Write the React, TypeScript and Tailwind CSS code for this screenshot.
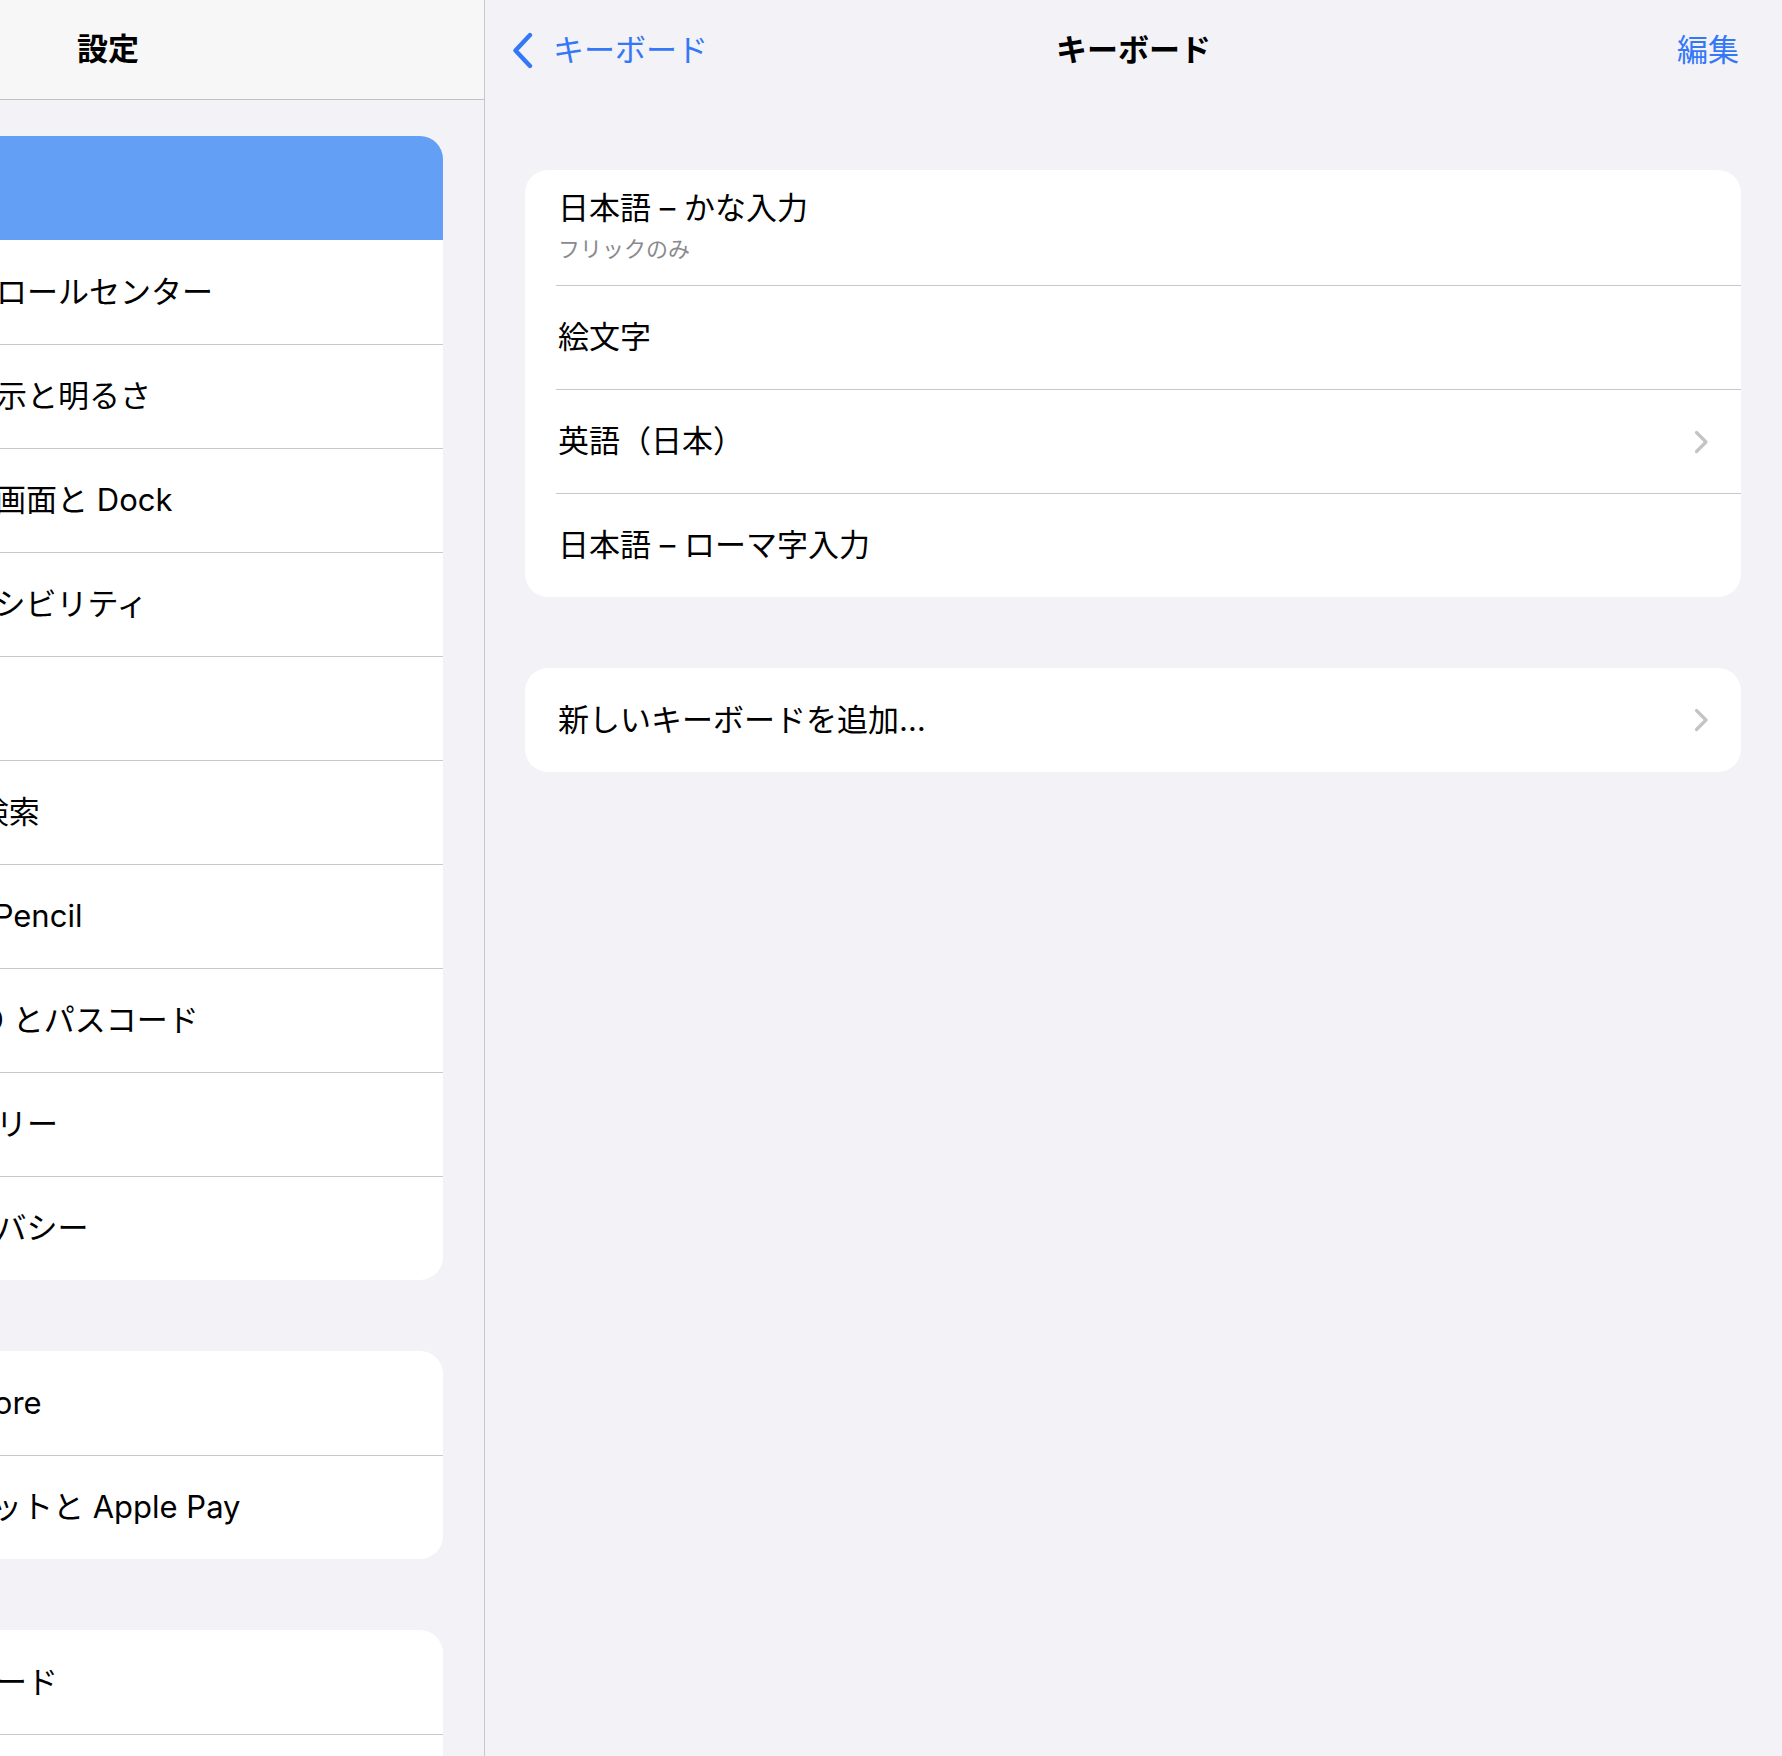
import React from "react";

const font = {
  fontFamily: 'Inter, "Noto Sans CJK JP", "Noto Sans", sans-serif',
};

const sidebarGroups = [
  [
    { label: "一般", ml: "ml-[-97px]" },
    { label: "コントロールセンター", ml: "ml-[-97px]" },
    { label: "画面表示と明るさ", ml: "ml-[-97px]" },
    { label: "ホーム画面と Dock", ml: "ml-[-97px]" },
    { label: "アクセシビリティ", ml: "ml-[-97px]" },
    { label: "壁紙", ml: "ml-[-97px]" },
    { label: "Siri と検索", ml: "ml-[-109px]" },
    { label: "Apple Pencil", ml: "ml-[-100px]" },
    { label: "Touch ID とパスコード", ml: "ml-[-126px]" },
    { label: "バッテリー", ml: "ml-[-97px]" },
    { label: "プライバシー", ml: "ml-[-97px]" },
  ],
  [
    { label: "App Store", ml: "ml-[-104px]" },
    { label: "ウォレットと Apple Pay", ml: "ml-[-102px]" },
  ],
  [
    { label: "パスワード", ml: "ml-[-97px]" },
    { label: "メール", ml: "ml-[-97px]" },
    { label: "連絡先", ml: "ml-[-97px]" },
  ],
];

const keyboards = ["絵文字", "英語（日本）", "日本語 – ローマ字入力"];

function Chevron() {
  return (
    <svg width="15" height="24" viewBox="0 0 15 24" fill="none">
      <path
        d="M2.5 2.5 L12 12 L2.5 21.5"
        stroke="#c4c4c7"
        strokeWidth="3.2"
        strokeLinecap="round"
        strokeLinejoin="round"
      />
    </svg>
  );
}

function BackChevron() {
  return (
    <svg width="23" height="37" viewBox="0 0 23 37" fill="none">
      <path
        d="M19 3 L4.5 18.5 L19 34"
        stroke="#3478f6"
        strokeWidth="4.4"
        strokeLinecap="round"
        strokeLinejoin="round"
      />
    </svg>
  );
}

function Sidebar() {
  return (
    <div className="w-[485px] h-full shrink-0 border-r border-[#c8c8cc] bg-[#f2f2f7] overflow-hidden">
      <div className="h-[100px] bg-[#f7f7f7] border-b border-[#c2c2c6] flex items-center pl-[77px]">
        <span className="text-[31px] font-bold text-black">設定</span>
      </div>
      <div className="pt-[36px] flex flex-col gap-[71px]">
        {sidebarGroups.map((group, gi) => (
          <div
            key={gi}
            className="w-[443px] bg-white rounded-r-[23px] overflow-hidden"
          >
            {group.map((item, i) => {
              const selected = gi === 0 && i === 0;
              const line = i > 0 && !(gi === 0 && i === 1);
              return (
                <div
                  key={item.label}
                  className={
                    "h-[104px] flex items-center " +
                    (selected ? "bg-[#63a0f5] " : "") +
                    (line ? "border-t border-[#c8c8cc]" : "")
                  }
                >
                  <span
                    className={
                      item.ml + " whitespace-nowrap text-[31px] text-black"
                    }
                  >
                    {item.label}
                  </span>
                </div>
              );
            })}
          </div>
        ))}
      </div>
    </div>
  );
}

export default function App() {
  return (
    <div
      className="w-[1782px] h-[1756px] flex bg-[#f2f2f7] overflow-hidden"
      style={font}
    >
      <Sidebar />
      <div className="flex-1 h-full">
        <div className="h-[100px] grid grid-cols-[1fr_auto_1fr] items-center">
          <div className="flex items-center pl-[26px] gap-[19px] text-[#3478f6]">
            <BackChevron />
            <span className="text-[31px]">キーボード</span>
          </div>
          <div className="text-[31px] font-bold text-black">キーボード</div>
          <div className="flex justify-end pr-[43px] text-[31px] text-[#3478f6]">
            編集
          </div>
        </div>

        <div className="ml-[40px] mr-[41px] mt-[70px] bg-white rounded-[23px] overflow-hidden">
          <div className="h-[115px] pl-[33px] pt-[19px]">
            <div className="text-[31px] leading-[38px] text-black">
              日本語 – かな入力
            </div>
            <div className="mt-[8px] text-[22px] leading-[28px] text-[#8a8a8e]">
              フリックのみ
            </div>
          </div>
          {keyboards.map((k) => (
            <div
              key={k}
              className="ml-[31px] h-[104px] border-t border-[#c8c8cc] flex items-center justify-between pl-[2px] pr-[32px]"
            >
              <span className="text-[31px] text-black">{k}</span>
              {k === "英語（日本）" && <Chevron />}
            </div>
          ))}
        </div>

        <div className="ml-[40px] mr-[41px] mt-[71px] h-[104px] bg-white rounded-[23px] flex items-center justify-between pl-[33px] pr-[32px]">
          <span className="text-[31px] text-black">新しいキーボードを追加…</span>
          <Chevron />
        </div>
      </div>
    </div>
  );
}
